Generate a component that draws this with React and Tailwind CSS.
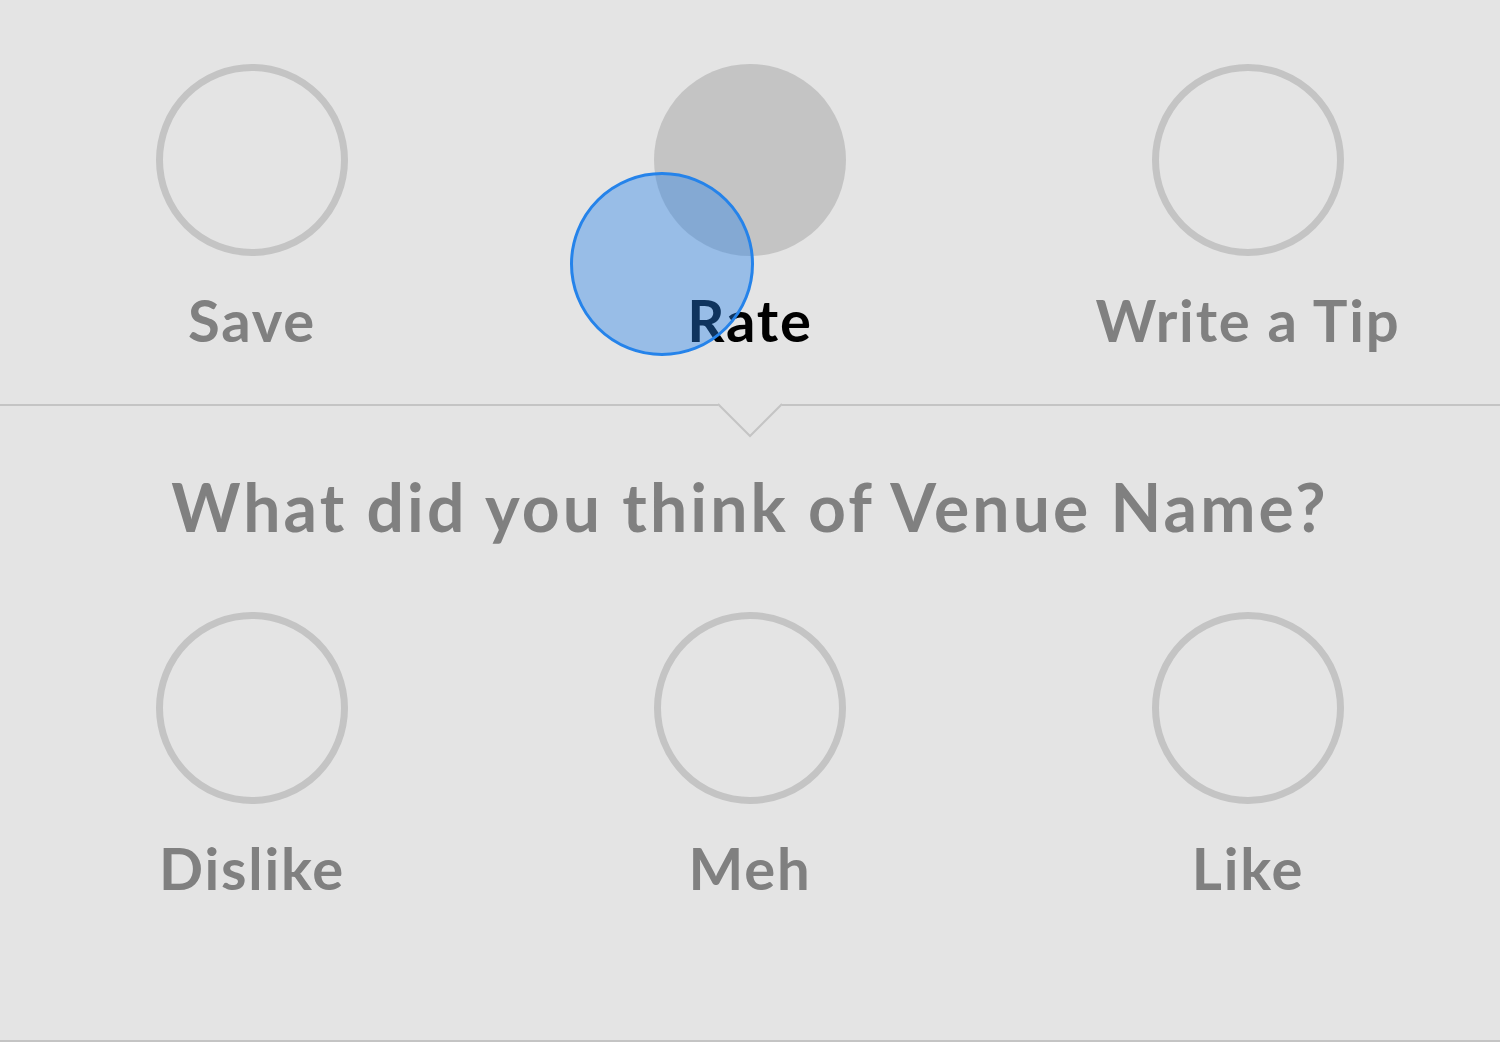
import React from "react";

const font = { fontFamily: "Lato, 'Open Sans', sans-serif" };

const Option = ({ label, active }) => (
  <div className="flex flex-col items-center">
    <div
      className={
        active
          ? "w-[192px] h-[192px] rounded-full bg-[#c4c4c4]"
          : "w-[192px] h-[192px] rounded-full border-[7px] border-[#c4c4c4]"
      }
    />
    <div
      className={`mt-[32px] text-[58px] leading-[64px] font-bold tracking-[1.8px] ${
        active ? "text-black" : "text-[#808080]"
      }`}
    >
      {label}
    </div>
  </div>
);

const App = () => {
  return (
    <div
      className="w-[1500px] h-[1042px] bg-[#e4e4e4] relative overflow-hidden border-b-2 border-[#c4c4c4]"
      style={font}
    >
      <div className="grid grid-cols-3 px-[3px] pt-[64px] h-[404px]">
        <Option label="Save" />
        <Option label="Rate" active />
        <Option label="Write a Tip" />
      </div>

      <div className="relative h-[2px] bg-[#c4c4c4]">
        {/* notch pointing at the active tab */}
        <svg
          className="absolute left-[718px] top-[-1px]"
          width="64"
          height="36"
          viewBox="0 0 64 36"
        >
          <rect x="0" y="0" width="64" height="3" fill="#e4e4e4" />
          <polyline
            points="0,1 32,33 64,1"
            fill="none"
            stroke="#c4c4c4"
            strokeWidth="2"
          />
        </svg>
      </div>

      <div className="text-center pt-[63px] text-[66px] leading-[76px] font-bold tracking-[3.1px] text-[#808080]">
        What did you think of Venue Name?
      </div>

      <div className="grid grid-cols-3 px-[3px] pt-[67px]">
        <Option label="Dislike" />
        <Option label="Meh" />
        <Option label="Like" />
      </div>

      {/* touch indicator */}
      <div className="absolute left-[570px] top-[172px] w-[184px] h-[184px] rounded-full border-[3px] border-[#2583ea] bg-[#2583ea]/40" />
    </div>
  );
};

export default App;
